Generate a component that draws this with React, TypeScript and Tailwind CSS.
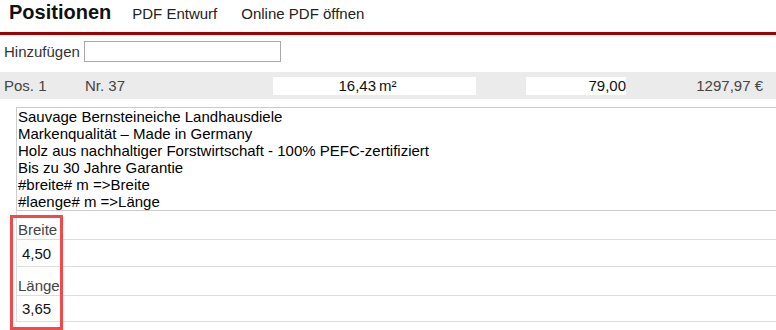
import React from 'react';

const descriptionLines = [
  'Sauvage Bernsteineiche Landhausdiele',
  'Markenqualität – Made in Germany',
  'Holz aus nachhaltiger Forstwirtschaft - 100% PEFC-zertifiziert',
  'Bis zu 30 Jahre Garantie',
  '#breite# m =>Breite',
  '#laenge# m =>Länge',
];

const fields = [
  { label: 'Breite', value: '4,50', labelHeight: 'h-[29px]', valueHeight: 'h-[27px]' },
  { label: 'Länge', value: '3,65', labelHeight: 'h-[29px]', valueHeight: 'h-[26px]' },
];

export default function App() {
  return (
    <div className="relative h-[330px] w-[776px] overflow-hidden bg-white font-['Liberation_Sans',Arial,sans-serif] text-[15px] leading-[17px] text-[#222]">
      {/* header */}
      <div className="h-[35px] border-b-[3px] border-[#a00000]">
        <div className="flex items-baseline px-[9px]">
          <h1 className="text-[20px] font-bold leading-[25px] text-[#111]">Positionen</h1>
          <a className="ml-[21px] cursor-pointer">PDF Entwurf</a>
          <a className="ml-[24px] cursor-pointer">Online PDF öffnen</a>
        </div>
      </div>

      {/* add */}
      <div className="mt-[6px] flex items-center pl-[4px] text-[#333]">
        <span>Hinzufügen</span>
        <input className="ml-[4px] h-[21px] w-[197px] border border-[#a9a9a9] bg-white px-1 outline-none" />
      </div>

      {/* position row */}
      <div className="mt-[10px] flex h-[27px] items-center bg-[#ebebeb] pl-[4px] text-[#444]">
        <span className="w-[81px]">Pos. 1</span>
        <span className="w-[188px]">Nr. 37</span>
        <div className="flex h-[18px] w-[203px] items-center bg-white text-[#111]">
          <span className="w-[103px] text-right">16,43</span>
          <span className="ml-[3px]">m²</span>
        </div>
        <div className="ml-[50px] flex h-[18px] w-[100px] items-center justify-end bg-white text-[#111]">79,00</div>
        <span className="flex-1 pr-[13px] text-right">1297,97 €</span>
      </div>

      {/* description */}
      <div className="ml-[16px] mt-[8px] h-[104px] overflow-hidden border border-r-0 border-[#cccccc] pl-[1px] text-black">
        {descriptionLines.map((line) => (
          <div key={line}>{line}</div>
        ))}
      </div>

      {/* variable fields */}
      <div className="ml-[16px] border-l border-[#dddddd]">
        {fields.map((field) => (
          <div key={field.label}>
            <div className={`${field.labelHeight} flex items-end border-b border-[#dddddd] pl-[1px] pb-[1px] text-[#444]`}>
              {field.label}
            </div>
            <div className={`${field.valueHeight} flex items-center border-b border-[#dddddd] pl-[5px] text-[#111]`}>
              {field.value}
            </div>
          </div>
        ))}
      </div>

      {/* highlight annotation */}
      <div className="pointer-events-none absolute left-[10px] top-[215px] h-[115px] w-[53px] border-[3px] border-[#f24a4a]" />
    </div>
  );
}
